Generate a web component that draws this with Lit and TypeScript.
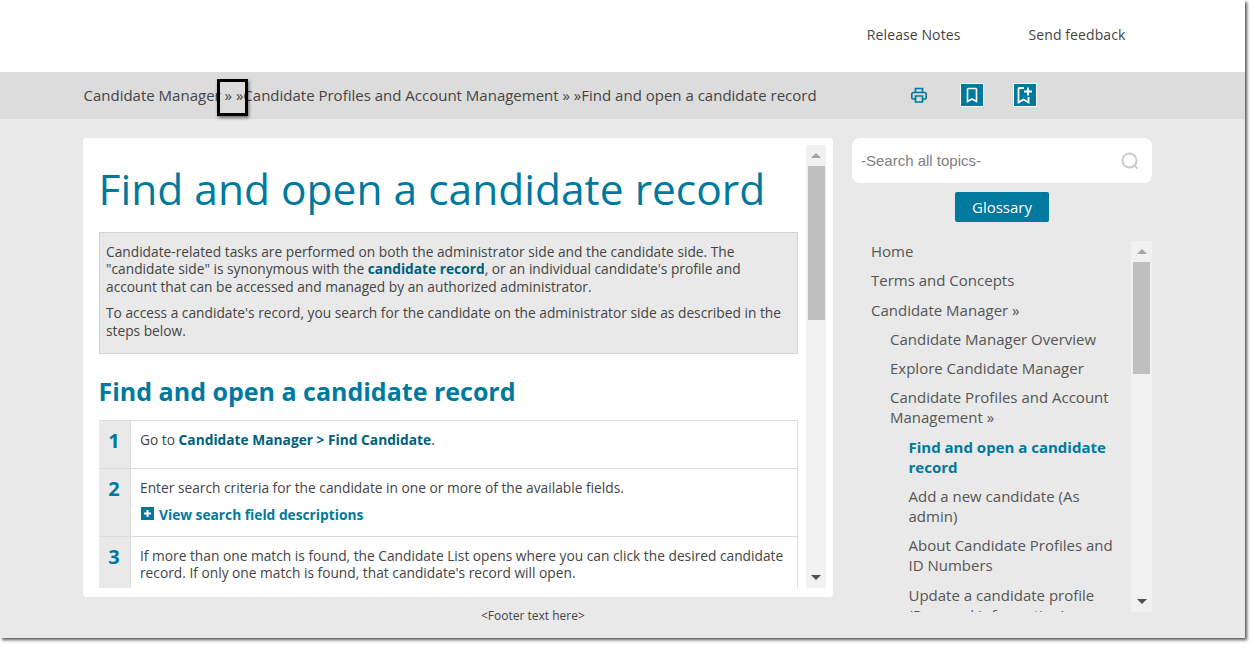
import { LitElement, html, css, svg } from 'lit';
import { customElement } from 'lit/decorators.js';

const navItems = [
  { label: 'Home', level: 0 },
  { label: 'Terms and Concepts', level: 0 },
  { label: 'Candidate Manager »', level: 0 },
  { label: 'Candidate Manager Overview', level: 1 },
  { label: 'Explore Candidate Manager', level: 1 },
  { label: 'Candidate Profiles and Account Management »', level: 1 },
  { label: 'Find and open a candidate record', level: 2, active: true },
  { label: 'Add a new candidate (As admin)', level: 2 },
  { label: 'About Candidate Profiles and ID Numbers', level: 2 },
  { label: 'Update a candidate profile (Personal Information)', level: 2 },
];

const printIcon = svg`<path d="M5.500 6.500V2.500h7v4M5 13H3a1.200 1.200 0 0 1-1.200-1.200V8.300A1.800 1.800 0 0 1 3.600 6.500h10.800a1.800 1.800 0 0 1 1.800 1.800v3.500A1.200 1.200 0 0 1 15 13h-2M5.500 10h7v6h-7z" fill="none" stroke="#00799e" stroke-width="1.700"/>`;

@customElement('app-root')
export class AppRoot extends LitElement {
  static styles = css`
    :host {
      display: block;
      width: 1255px;
      height: 648px;
      background: #fff;
      font-family: 'Open Sans', sans-serif;
      color: #444;
    }
    .frame {
      position: relative;
      width: 1245px;
      height: 638px;
      background: #e9e9e9;
      box-shadow: 2px 2px 3px #555;
      overflow: hidden;
    }
    .top {
      height: 72px;
      background: #fff;
      display: flex;
      justify-content: flex-end;
      gap: 68px;
      padding: 25px 119.500px 0 0;
      box-sizing: border-box;
      font-size: 14px;
      line-height: 20px;
      letter-spacing: 0.1px;
    }
    .crumbs {
      height: 47px;
      background: #dcdcdc;
      display: flex;
      align-items: center;
      padding-left: 83.500px;
      font-size: 15px;
      color: #444;
    }
    .crumb-text {
      width: 823.500px;
      white-space: nowrap;
      margin-top: -2px;
    }
    .tools {
      display: flex;
      align-items: center;
      gap: 29px;
      padding-bottom: 1px;
    }
    .tool {
      width: 24px;
      height: 24px;
      display: block;
    }
    .mark {
      position: absolute;
      left: 217px;
      top: 79px;
      width: 31px;
      height: 37px;
      box-sizing: border-box;
      border: 3px solid #000;
      box-shadow: 1px 2px 3px rgba(0, 0, 0, 0.5);
    }
    .main {
      display: flex;
      gap: 19px;
      padding: 19px 0 0 83px;
    }
    .card {
      width: 750px;
      height: 459px;
      box-sizing: border-box;
      background: #fff;
      border-radius: 4px;
      padding: 7px 7px 9px 16px;
      display: flex;
      gap: 8px;
    }
    .article {
      width: 699px;
      overflow: hidden;
      font-size: 13.750px;
      line-height: 17.500px;
    }
    h1 {
      margin: 14px 0 0 -0.500px;
      font-size: 42.500px;
      line-height: 60px;
      font-weight: 400;
      color: #00799e;
      white-space: nowrap;
    }
    .note {
      margin-top: 13px;
      box-sizing: border-box;
      height: 122px;
      background: #e9e9e9;
      border: 1px solid #d4d4d4;
      padding: 9.500px 6px;
    }
    .note p {
      margin: 0 0 9px;
    }
    .note b, .step b {
      color: #005f7c;
      font-weight: 700;
    }
    h2 {
      margin: 19px 0 0 -0.500px;
      font-size: 25px;
      line-height: 36px;
      font-weight: 700;
      color: #00799e;
      white-space: nowrap;
    }
    .steps {
      margin-top: 11px;
      border-top: 1px solid #ddd;
      border-right: 1px solid #ddd;
    }
    .step {
      display: flex;
      border-bottom: 1px solid #ddd;
    }
    .num {
      width: 30px;
      flex: none;
      background: #e9e9e9;
      border-right: 1px solid #ddd;
      color: #00799e;
      font-size: 20px;
      font-weight: 700;
      line-height: 24px;
      text-align: center;
      padding: 8px 1px 0 0;
    }
    .body {
      flex: 1;
      padding: 9.500px 9px 0;
    }
    .body p {
      margin: 0;
    }
    .one { height: 47px; }
    .two { height: 67px; }
    .three { height: 67px; }
    .more {
      margin-top: 10px;
      display: flex;
      align-items: center;
      gap: 5px;
      color: #00799e;
      font-weight: 700;
    }
    .plus {
      width: 13px;
      height: 13px;
      display: block;
      margin: -3px 0 0 1px;
    }
    .bar {
      width: 20px;
      background: #f1f1f1;
      display: flex;
      flex-direction: column;
      align-items: center;
    }
    .arrow {
      height: 21px;
      flex: none;
      display: flex;
      align-items: center;
      justify-content: center;
    }
    .arrow i {
      display: block;
      border-left: 5px solid transparent;
      border-right: 5px solid transparent;
    }
    .arrow.up i { border-bottom: 5px solid #a3a3a3; }
    .arrow.down i { border-top: 5px solid #505050; }
    .thumb {
      width: 17px;
      background: #bfbfbf;
      flex: none;
    }
    .space { flex: 1; }
    .side {
      width: 300px;
    }
    .search {
      height: 45px;
      background: #fff;
      border-radius: 8px;
      display: flex;
      align-items: center;
      justify-content: space-between;
      padding: 0 12px 0 9px;
      box-sizing: border-box;
      font-family: 'Liberation Sans', Arial, sans-serif;
      font-size: 15px;
      color: #808080;
    }
    .search svg {
      width: 20px;
      height: 20px;
      display: block;
    }
    .gloss-row {
      display: flex;
      justify-content: center;
      margin-top: 9px;
    }
    .gloss {
      width: 94px;
      height: 30px;
      background: #00799e;
      color: #fff;
      border-radius: 2px;
      font-size: 15px;
      font-weight: 500;
      line-height: 30px;
      text-align: center;
    }
    .nav-wrap {
      display: flex;
      height: 371px;
      margin-top: 19px;
    }
    .nav {
      flex: 1;
      overflow: hidden;
      padding-left: 19px;
      font-size: 15px;
      line-height: 20px;
      color: #555;
    }
    .nav-item {
      margin-bottom: 9.300px;
    }
    .nav-item.l1 { padding-left: 19px; }
    .nav-item.l2 { padding-left: 37.500px; }
    .nav-item.active {
      color: #00799e;
      font-weight: 700;
    }
    .nav-wrap .bar { width: 21px; }
    .footer {
      margin-top: 9px;
      padding-left: 398px;
      font-size: 12px;
      line-height: 20px;
      color: #444;
    }
  `;

  private bar(thumbTop: number, thumbHeight: number) {
    return html`<div class="bar">
      <div class="arrow up"><i></i></div>
      <div class="thumb" style="margin-top:${thumbTop}px;height:${thumbHeight}px"></div>
      <div class="space"></div>
      <div class="arrow down"><i></i></div>
    </div>`;
  }

  render() {
    return html`
      <div class="frame">
        <div class="top"><span>Release Notes</span><span>Send feedback</span></div>
        <div class="crumbs">
          <div class="crumb-text">Candidate Manager » »Candidate Profiles and Account Management » »Find and open a candidate record</div>
          <div class="tools">
            <svg class="tool" viewBox="-3 -3 24 24">${printIcon}</svg>
            <svg class="tool" viewBox="0 0 24 24">
              <rect x="0.500" y="0.500" width="23" height="23" fill="#00799e" stroke="#fff"/>
              <path d="M7.500 6.500a1 1 0 0 1 1-1h7a1 1 0 0 1 1 1V18.500l-4.500-2.500-4.500 2.500z" fill="none" stroke="#fff" stroke-width="1.600"/>
            </svg>
            <svg class="tool" viewBox="0 0 24 24">
              <rect x="0.500" y="0.500" width="23" height="23" fill="#00799e" stroke="#fff"/>
              <path d="M11 5H6.500a1 1 0 0 0-1 1V19.500l5-3 5 3V14M11 8.500h8M15 4.500v8" fill="none" stroke="#fff" stroke-width="1.800"/>
            </svg>
          </div>
        </div>
        <div class="mark"></div>
        <div class="main">
          <div class="left">
            <div class="card">
              <div class="article">
                <h1>Find and open a candidate record</h1>
                <div class="note">
                  <p>Candidate-related tasks are performed on both the administrator side and the candidate side. The "candidate side" is synonymous with the <b>candidate record</b>, or an individual candidate's profile and account that can be accessed and managed by an authorized administrator.</p>
                  <p>To access a candidate's record, you search for the candidate on the administrator side as described in the steps below.</p>
                </div>
                <h2>Find and open a candidate record</h2>
                <div class="steps">
                  <div class="step one">
                    <div class="num">1</div>
                    <div class="body"><p>Go to <b>Candidate Manager &gt; Find Candidate</b>.</p></div>
                  </div>
                  <div class="step two">
                    <div class="num">2</div>
                    <div class="body">
                      <p>Enter search criteria for the candidate in one or more of the available fields.</p>
                      <div class="more">
                        <svg class="plus" viewBox="0 0 13 13">
                          <rect width="13" height="13" fill="#00799e"/>
                          <path d="M6.500 3v7M3 6.500h7" stroke="#fff" stroke-width="2"/>
                        </svg>
                        View search field descriptions
                      </div>
                    </div>
                  </div>
                  <div class="step three">
                    <div class="num">3</div>
                    <div class="body"><p>If more than one match is found, the Candidate List opens where you can click the desired candidate record. If only one match is found, that candidate's record will open.</p></div>
                  </div>
                </div>
              </div>
              ${this.bar(0, 154)}
            </div>
            <div class="footer">&lt;Footer text here&gt;</div>
          </div>
          <div class="side">
            <div class="search">
              <span>-Search all topics-</span>
              <svg viewBox="0 0 20 20">
                <circle cx="9.500" cy="9.500" r="7" fill="none" stroke="#ccc" stroke-width="2"/>
                <path d="M14.500 14.500l3 3" stroke="#ccc" stroke-width="2"/>
              </svg>
            </div>
            <div class="gloss-row"><div class="gloss">Glossary</div></div>
            <div class="nav-wrap">
              <div class="nav">
                ${navItems.map(
                  (item) => html`<div class="nav-item l${item.level} ${item.active ? 'active' : ''}">${item.label}</div>`,
                )}
              </div>
              ${this.bar(0, 112)}
            </div>
          </div>
        </div>
      </div>
    `;
  }
}
